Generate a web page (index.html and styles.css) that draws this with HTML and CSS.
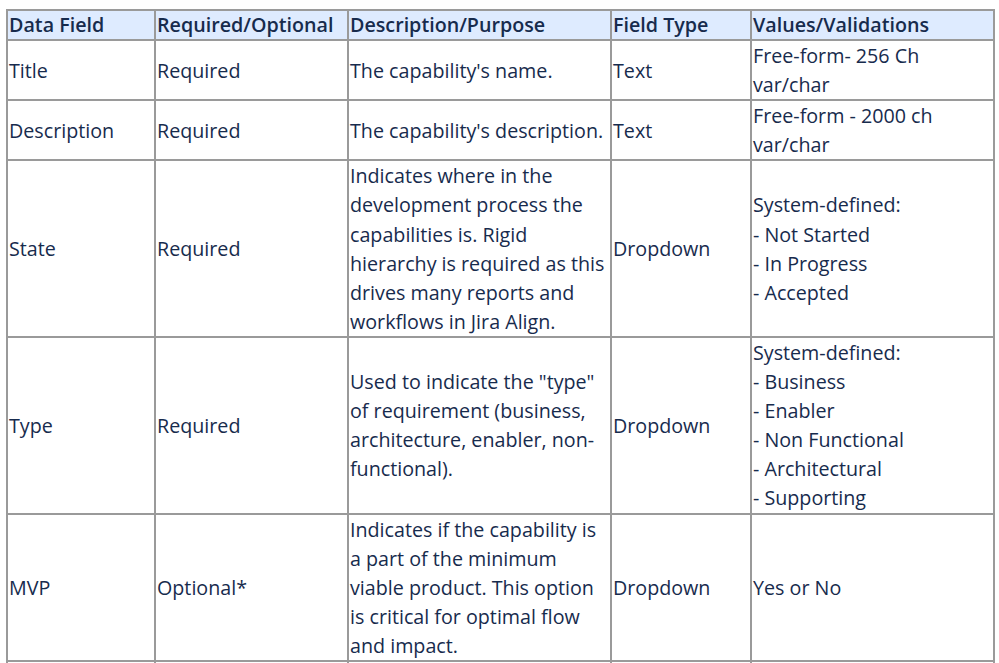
FILE: index.html
```html
<!DOCTYPE html>
<html>
<head>
<meta charset="utf-8">
<link rel="stylesheet" href="styles.css">
</head>
<body>
<table class="fields">
  <colgroup>
    <col class="c1"><col class="c2"><col class="c3"><col class="c4"><col class="c5">
  </colgroup>
  <thead>
    <tr>
      <th>Data Field</th>
      <th>Required/Optional</th>
      <th>Description/Purpose</th>
      <th>Field Type</th>
      <th>Values/Validations</th>
    </tr>
  </thead>
  <tbody>
    <tr>
      <td>Title</td>
      <td>Required</td>
      <td>The capability's name.</td>
      <td>Text</td>
      <td>Free-form- 256 Ch<br>var/char</td>
    </tr>
    <tr>
      <td>Description</td>
      <td>Required</td>
      <td>The capability's description.</td>
      <td>Text</td>
      <td>Free-form - 2000 ch<br>var/char</td>
    </tr>
    <tr>
      <td>State</td>
      <td>Required</td>
      <td>Indicates where in the development process the capabilities is. Rigid hierarchy is required as this drives many reports and workflows in Jira Align.</td>
      <td>Dropdown</td>
      <td>System-defined:<br>- Not Started<br>- In Progress<br>- Accepted</td>
    </tr>
    <tr>
      <td>Type</td>
      <td>Required</td>
      <td>Used to indicate the "type" of requirement (business, architecture, enabler, non-functional).</td>
      <td>Dropdown</td>
      <td>System-defined:<br>- Business<br>- Enabler<br>- Non Functional<br>- Architectural<br>- Supporting</td>
    </tr>
    <tr>
      <td>MVP</td>
      <td>Optional*</td>
      <td>Indicates if the capability is a part of the minimum viable product. This option is critical for optimal flow and impact.</td>
      <td>Dropdown</td>
      <td>Yes or No</td>
    </tr>
    <tr class="next">
      <td></td><td></td><td></td><td></td><td></td>
    </tr>
  </tbody>
</table>
</body>
</html>
```

FILE: styles.css
```css
html, body {
  margin: 0;
  padding: 0;
  background: #ffffff;
}
body {
  padding: 9px 0 0 6px;
  font-family: "Open Sans", "Noto Sans", sans-serif;
  font-size: 19.7px;
  line-height: 29.1px;
  color: #172b4d;
}
.fields {
  border-collapse: collapse;
  table-layout: fixed;
  width: 989px;
  border: 2px solid #474747;
}
.c1 { width: 148px; }
.c2 { width: 193px; }
.c3 { width: 263px; }
.c4 { width: 140px; }
.c5 { width: 243px; }
.fields th,
.fields td {
  border: 2px solid #9a9a9a;
  padding: 0 0 0 1px;
  text-align: left;
  vertical-align: middle;
  font-weight: normal;
}
.fields th {
  background: #deebff;
  line-height: 28px;
  font-weight: 600;
}
.fields .next td {
  height: 60px;
}
```
